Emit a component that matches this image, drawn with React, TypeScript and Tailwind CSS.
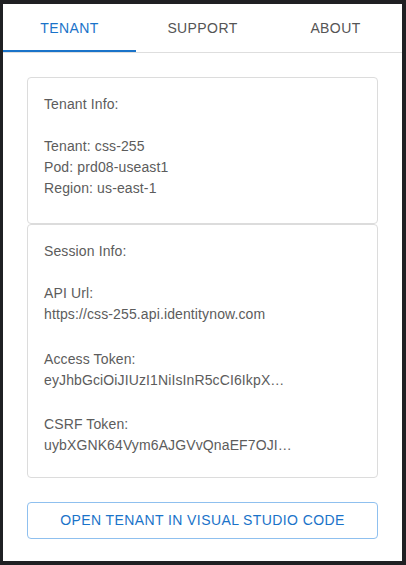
import React from "react";

const font = { fontFamily: '"Liberation Sans", Arial, sans-serif' };

export default function App() {
  return (
    <div
      className="w-[406px] h-[565px] bg-[#1f2023] pt-[4px] pl-[3px] pr-[4px] pb-[4px] flex"
      style={font}
    >
      <div className="flex-1 bg-white flex flex-col text-[14px] leading-[21px] text-[#5c5c5c]">
        <div className="flex border-b border-[#dedede]">
          <div className="flex-1 h-[48px] flex items-center justify-center border-b-2 border-[#1a73c9] text-[#1a73c9] tracking-[0.4px] pt-[2px]">
            TENANT
          </div>
          <div className="flex-1 h-[48px] flex items-center justify-center text-[#555] tracking-[0.4px]">
            SUPPORT
          </div>
          <div className="flex-1 h-[48px] flex items-center justify-center text-[#555] tracking-[0.4px]">
            ABOUT
          </div>
        </div>
        <div className="px-6 pt-6 flex flex-col tracking-[0.12px]">
          <div className="border border-[#dcdcdc] rounded-[4px] px-4 pt-4 pb-6">
            <div>Tenant Info:</div>
            <div className="h-[21px]" />
            <div>Tenant: css-255</div>
            <div>Pod: prd08-useast1</div>
            <div>Region: us-east-1</div>
          </div>
          <div className="border border-[#dcdcdc] rounded-[4px] px-4 pt-4 pb-[21px]">
            <div>Session Info:</div>
            <div className="mt-[21px]">API Url:</div>
            <div>https://css-255.api.identitynow.com</div>
            <div className="mt-[24px]">Access Token:</div>
            <div>eyJhbGciOiJIUzI1NiIsInR5cCI6IkpX…</div>
            <div className="mt-[23px]">CSRF Token:</div>
            <div>uybXGNK64Vym6AJGVvQnaEF7OJI…</div>
          </div>
          <button className="mt-6 h-[37px] border border-[#8fc0ef] rounded-[4px] text-[#1a73c9] tracking-[0.4px] flex items-center justify-center">
            OPEN TENANT IN VISUAL STUDIO CODE
          </button>
        </div>
      </div>
    </div>
  );
}
